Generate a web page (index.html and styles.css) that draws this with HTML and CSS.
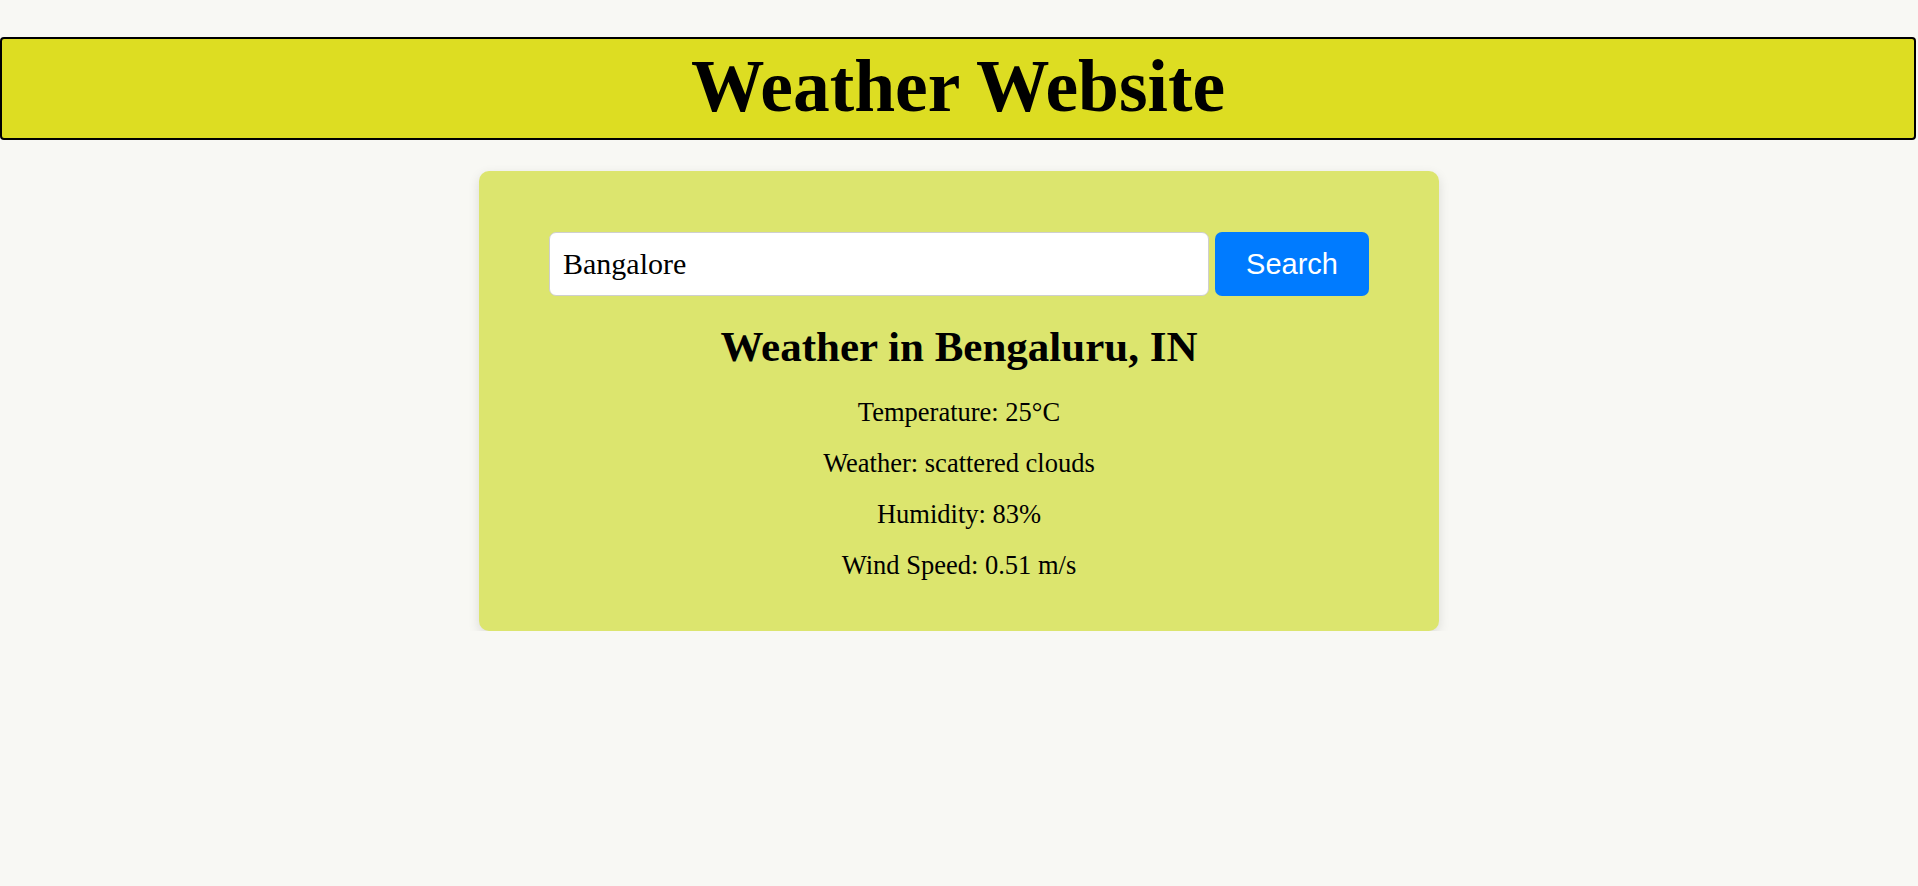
FILE: index.html
```html
<!DOCTYPE html>
<html lang="en">
<head>
<meta charset="utf-8">
<title>Weather Website</title>
<link rel="stylesheet" href="styles.css">
</head>
<body>
<header class="site-header">
  <h1 class="site-title">Weather Website</h1>
</header>
<main class="page">
  <section class="card">
    <form class="search" onsubmit="return false">
      <input class="search-input" type="text" value="Bangalore">
      <button class="search-btn" type="submit">Search</button>
    </form>
    <div class="result">
      <h2 class="result-title">Weather in Bengaluru, IN</h2>
      <p class="result-line">Temperature: 25°C</p>
      <p class="result-line">Weather: scattered clouds</p>
      <p class="result-line">Humidity: 83%</p>
      <p class="result-line">Wind Speed: 0.51 m/s</p>
    </div>
  </section>
</main>
</body>
</html>
```
FILE: styles.css
```css
html, body {
  margin: 0;
  padding: 0;
}
body {
  background: #f8f8f4;
  font-family: "Liberation Serif", "Times New Roman", serif;
  color: #000;
}
.site-header {
  margin-top: 37px;
  margin-right: 2px;
  height: 99px;
  background: #dddd22;
  border: 2px solid #000;
  border-radius: 4px;
  display: flex;
  align-items: center;
  justify-content: center;
}
.site-title {
  margin: 0;
  font-size: 73.5px;
  font-weight: bold;
  line-height: 1;
  padding-bottom: 3px;
}
.page {
  display: flex;
  justify-content: center;
  padding-top: 31px;
}
.card {
  width: 960px;
  box-sizing: border-box;
  background: #dce56e;
  border-radius: 10px;
  box-shadow: 0 4px 12px rgba(0, 0, 0, 0.12);
  padding: 61px 70px 40px;
}
.search {
  display: flex;
  gap: 6px;
}
.search-input {
  flex: 1;
  height: 64px;
  box-sizing: border-box;
  border: 1px solid #cfcfcf;
  border-radius: 7px;
  padding: 0 13px;
  font-family: "Liberation Serif", "Times New Roman", serif;
  font-size: 30px;
  color: #000;
  background: #fff;
  outline: none;
}
.search-btn {
  width: 154px;
  height: 64px;
  border: none;
  border-radius: 7px;
  background: #007bff;
  color: #fff;
  font-family: "Liberation Sans", Arial, sans-serif;
  font-size: 29px;
}
.result {
  text-align: center;
}
.result-title {
  margin: 31px 0 20px;
  font-size: 43px;
  line-height: 40px;
  font-weight: bold;
}
.result-line {
  margin: 0;
  font-size: 26.5px;
  line-height: 51px;
}
```
